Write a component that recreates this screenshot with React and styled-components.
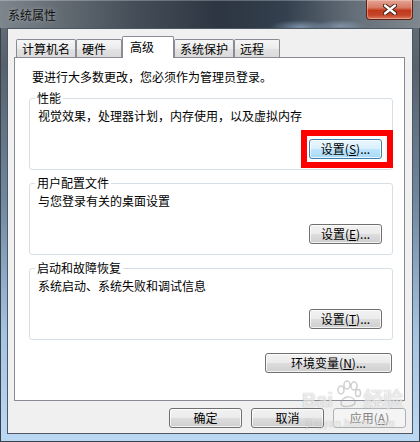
import styled, { createGlobalStyle } from "styled-components";

const GlobalStyle = createGlobalStyle`
  html, body {
    margin: 0;
    padding: 0;
  }
  body {
    width: 420px;
    height: 442px;
    overflow: hidden;
    font-family: "Noto Sans CJK SC", "Noto Sans", sans-serif;
    font-size: 12px;
    color: #000;
  }
`;

const StrWindow = styled.div`
  position: relative;
  width: 420px;
  height: 442px;
  display: flex;
  flex-direction: column;
  overflow: hidden;
  background: linear-gradient(
    180deg,
    #6a737c 0%,
    #56616c 15%,
    #6f879f 45%,
    #a4c3e2 75%,
    #bcd9f4 100%
  );
  box-shadow: inset 1px 0 0 #3a4047, inset -1px 0 0 #3a4047,
    inset 0 -1px 0 #3a4047;
`;

const StrTitleBar = styled.div`
  flex: none;
  height: 28px;
  display: flex;
  justify-content: space-between;
  align-items: flex-start;
  background: radial-gradient(
      ellipse 30px 7px at 300px 27px,
      rgba(170, 200, 230, 0.55),
      transparent
    ),
    radial-gradient(
      ellipse 26px 6px at 340px 26px,
      rgba(170, 200, 230, 0.45),
      transparent
    ),
    linear-gradient(
      90deg,
      #7d858d 0%,
      #626a72 15%,
      #454e58 32%,
      #2c3541 52%,
      #34404e 68%,
      #646e79 84%,
      #80878e 100%
    );
  box-shadow: inset 0 1px 0 rgba(255, 255, 255, 0.25);
`;

const StrTitle = styled.div`
  padding: 8px 0 0 8px;
  line-height: 14px;
  color: #111;
  text-shadow: 0 0 4px rgba(255, 255, 255, 0.45);
`;

const StrCloseBtn = styled.div`
  width: 47px;
  height: 20px;
  margin-right: 7px;
  box-sizing: border-box;
  display: flex;
  align-items: center;
  justify-content: center;
  border: 1px solid #5a2418;
  border-top: none;
  border-radius: 0 0 4px 4px;
  background: linear-gradient(
    180deg,
    #e4a595 0%,
    #d67a64 40%,
    #c2391c 55%,
    #c4452a 80%,
    #dd7a5c 100%
  );
  box-shadow: inset 0 0 0 1px rgba(255, 210, 200, 0.45);
`;

const StrBody = styled.div`
  flex: 1;
  display: flex;
  padding: 0 7px 8px;
`;

const StrClient = styled.div`
  flex: 1;
  display: flex;
  flex-direction: column;
  border: 1px solid #4d5864;
  background: #f0f0f0;
  padding: 7px 7px 5px 6px;
`;

const StrTabStrip = styled.div`
  display: flex;
  align-items: flex-end;
  height: 21px;
  padding-left: 2px;
`;

const StrTab = styled.div`
  box-sizing: border-box;
  min-width: ${(p) => (p.$active ? "52px" : "46px")};
  height: ${(p) => (p.$active ? "22px" : "18px")};
  margin-bottom: ${(p) => (p.$active ? "-1px" : "0")};
  padding: ${(p) => (p.$active ? "3px 7px 0" : "2px 5px 0")};
  line-height: 14px;
  white-space: nowrap;
  border: 1px solid #898c95;
  border-bottom: none;
  border-radius: 2px 2px 0 0;
  position: relative;
  z-index: ${(p) => (p.$active ? 1 : 0)};
  background: ${(p) =>
    p.$active
      ? "#fff"
      : "linear-gradient(180deg, #f6f6f6 0%, #ececec 50%, #e2e2e2 51%, #dadada 100%)"};
`;

const StrPanel = styled.div`
  box-sizing: border-box;
  height: 344px;
  border: 1px solid #898c95;
  background: #fff;
  padding: 12px 11px 0 14px;
  display: flex;
  flex-direction: column;
  gap: 6px;
`;

const StrIntro = styled.div`
  line-height: 14px;
  margin: 0 0 1px 3px;
`;

const StrGroup = styled.fieldset`
  margin: 0;
  min-width: 0;
  padding: 4px 10px 10px 8px;
  border: 1px solid #d5dfe5;
  border-radius: 3px;
`;

const StrLegend = styled.legend`
  padding: 0 2px;
  margin-left: -3px;
  line-height: 14px;
  font-size: 12px;
`;

const StrDesc = styled.div`
  line-height: 14px;
`;

const StrBtnRow = styled.div`
  display: flex;
  justify-content: flex-end;
  margin-top: ${(p) => p.$top || "16px"};
  margin-right: ${(p) => p.$right || "0"};
  gap: 9px;
`;

const StrBtn = styled.button`
  box-sizing: border-box;
  width: ${(p) => p.$width || "73px"};
  height: 20px;
  padding: 0;
  font-family: inherit;
  font-size: 12px;
  line-height: 14px;
  color: #000;
  border: 1px solid #707070;
  border-radius: 3px;
  background: linear-gradient(
    180deg,
    #f2f2f2 0%,
    #ebebeb 50%,
    #dddddd 51%,
    #cfcfcf 100%
  );
  box-shadow: inset 0 0 0 1px rgba(255, 255, 255, 0.75);

  &.focus-btn {
    border-color: #3c7fb1;
    background: linear-gradient(
      180deg,
      #eaf6fd 0%,
      #d9f0fc 50%,
      #bee6fd 51%,
      #a7d9f5 100%
    );
  }

  &:disabled {
    color: #838383;
    border-color: #adb2b5;
    background: #f4f4f4;
    box-shadow: none;
  }
`;

const StrHighlight = styled.span`
  position: relative;
  display: inline-flex;

  &::after {
    content: "";
    position: absolute;
    left: -8px;
    right: -11px;
    top: -9px;
    bottom: -9px;
    border: 6px solid #ff0000;
    pointer-events: none;
  }
`;

const StrWatermark = styled.div`
  position: absolute;
  left: 302px;
  top: 380px;
  display: flex;
  flex-direction: column;
  align-items: flex-start;
  pointer-events: none;
  color: rgba(255, 255, 255, 0.75);
  text-shadow: 0 0 1px rgba(110, 110, 110, 0.7);
  opacity: 0.8;
`;

const StrMarkRow = styled.div`
  display: flex;
  align-items: flex-end;
  font-family: "Liberation Sans", "Noto Sans CJK SC", sans-serif;
  font-weight: bold;
  font-size: 20px;
  line-height: 20px;
`;

const StrMarkUrl = styled.div`
  font-family: "Liberation Sans", sans-serif;
  font-size: 10px;
  margin-top: 8px;
  margin-left: 4px;
  letter-spacing: 0.5px;
`;

function CloseGlyph() {
  return (
    <svg width="14" height="11" viewBox="0 0 14 11">
      <path
        d="M2 1.5 L12 9.5 M12 1.5 L2 9.5"
        stroke="#3a1a12"
        strokeWidth="4.2"
        strokeLinecap="round"
      />
      <path
        d="M2 1.5 L12 9.5 M12 1.5 L2 9.5"
        stroke="#fff"
        strokeWidth="2.4"
        strokeLinecap="round"
      />
    </svg>
  );
}

function PawMark() {
  return (
    <svg width="30" height="30" viewBox="0 0 30 30">
      <g fill="none" stroke="rgba(150,150,150,0.55)" strokeWidth="1.5">
        <ellipse cx="8" cy="10" rx="3" ry="4" />
        <ellipse cx="14" cy="5" rx="3" ry="4" />
        <ellipse cx="21" cy="6" rx="3" ry="4" />
        <ellipse cx="25" cy="13" rx="2.5" ry="3.5" />
        <path d="M8 24 C8 16 20 14 22 22 C23 27 9 28 8 24 Z" />
      </g>
    </svg>
  );
}

function Mnemonic({ label, letter }) {
  return (
    <>
      {label}(<u>{letter}</u>)...
    </>
  );
}

const tabs = ["计算机名", "硬件", "高级", "系统保护", "远程"];

export default function App() {
  return (
    <>
      <GlobalStyle />
      <StrWindow>
        <StrTitleBar>
          <StrTitle>系统属性</StrTitle>
          <StrCloseBtn>
            <CloseGlyph />
          </StrCloseBtn>
        </StrTitleBar>
        <StrBody>
          <StrClient>
            <StrTabStrip>
              {tabs.map((t) => (
                <StrTab key={t} $active={t === "高级"}>
                  {t}
                </StrTab>
              ))}
            </StrTabStrip>
            <StrPanel>
              <StrIntro>要进行大多数更改，您必须作为管理员登录。</StrIntro>
              <StrGroup>
                <StrLegend>性能</StrLegend>
                <StrDesc>视觉效果，处理器计划，内存使用，以及虚拟内存</StrDesc>
                <StrBtnRow>
                  <StrHighlight>
                    <StrBtn type="button" className="focus-btn">
                      <Mnemonic label="设置" letter="S" />
                    </StrBtn>
                  </StrHighlight>
                </StrBtnRow>
              </StrGroup>
              <StrGroup>
                <StrLegend>用户配置文件</StrLegend>
                <StrDesc>与您登录有关的桌面设置</StrDesc>
                <StrBtnRow>
                  <StrBtn type="button">
                    <Mnemonic label="设置" letter="E" />
                  </StrBtn>
                </StrBtnRow>
              </StrGroup>
              <StrGroup>
                <StrLegend>启动和故障恢复</StrLegend>
                <StrDesc>系统启动、系统失败和调试信息</StrDesc>
                <StrBtnRow>
                  <StrBtn type="button">
                    <Mnemonic label="设置" letter="T" />
                  </StrBtn>
                </StrBtnRow>
              </StrGroup>
              <StrBtnRow $top="7px" $right="1px">
                <StrBtn type="button" $width="127px">
                  <Mnemonic label="环境变量" letter="N" />
                </StrBtn>
              </StrBtnRow>
            </StrPanel>
            <StrBtnRow $top="7px" $right="-1px">
              <StrBtn type="button">确定</StrBtn>
              <StrBtn type="button">取消</StrBtn>
              <StrBtn type="button" disabled>
                应用(<u>A</u>)
              </StrBtn>
            </StrBtnRow>
          </StrClient>
        </StrBody>
        <StrWatermark>
          <StrMarkRow>
            <span>Bai</span>
            <PawMark />
            <span>经验</span>
          </StrMarkRow>
          <StrMarkUrl>jingyan.baidu.com</StrMarkUrl>
        </StrWatermark>
      </StrWindow>
    </>
  );
}
